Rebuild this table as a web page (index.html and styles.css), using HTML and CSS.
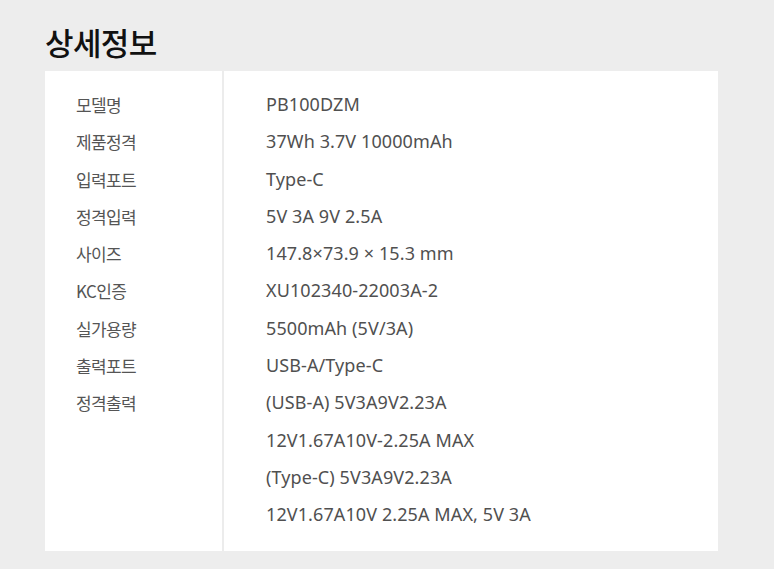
FILE: index.html
```html
<!DOCTYPE html>
<html lang="ko">
<head>
<meta charset="utf-8">
<link rel="stylesheet" href="styles.css">
</head>
<body>
<section class="spec">
  <h2 class="spec-title">상세정보</h2>
  <div class="spec-card">
    <ul class="spec-labels">
      <li>모델명</li>
      <li>제품정격</li>
      <li>입력포트</li>
      <li>정격입력</li>
      <li>사이즈</li>
      <li>KC인증</li>
      <li>실가용량</li>
      <li>출력포트</li>
      <li>정격출력</li>
    </ul>
    <ul class="spec-values">
      <li>PB100DZM</li>
      <li>37Wh 3.7V 10000mAh</li>
      <li>Type-C</li>
      <li>5V 3A 9V 2.5A</li>
      <li>147.8×73.9 × 15.3 mm</li>
      <li>XU102340-22003A-2</li>
      <li>5500mAh (5V/3A)</li>
      <li>USB-A/Type-C</li>
      <li>(USB-A) 5V3A9V2.23A</li>
      <li>12V1.67A10V-2.25A MAX</li>
      <li>(Type-C) 5V3A9V2.23A</li>
      <li>12V1.67A10V 2.25A MAX, 5V 3A</li>
    </ul>
  </div>
</section>
</body>
</html>
```
FILE: styles.css
```css
html, body {
  margin: 0;
  padding: 0;
  background: #ededed;
}
body {
  font-family: "Noto Sans CJK KR", "Noto Sans", sans-serif;
  color: #555;
}
.spec {
  padding: 22px 56px 18px 45px;
}
.spec-title {
  margin: 0 0 9px;
  font-size: 31px;
  line-height: 40px;
  font-weight: 500;
  color: #111;
  letter-spacing: -0.6px;
}
.spec-card {
  display: flex;
  background: #fff;
  height: 480px;
  box-sizing: border-box;
}
.spec-labels,
.spec-values {
  list-style: none;
  margin: 0;
  padding-top: 15px;
  line-height: 37.3px;
}
.spec-labels {
  width: 146px;
  padding-left: 31px;
  border-right: 2px solid #ececec;
  font-size: 17px;
  letter-spacing: -0.6px;
}
.spec-values {
  padding-left: 42px;
  font-family: "Noto Sans", "Noto Sans CJK KR", sans-serif;
  font-size: 18px;
  letter-spacing: 0.1px;
  color: #505050;
}
```
